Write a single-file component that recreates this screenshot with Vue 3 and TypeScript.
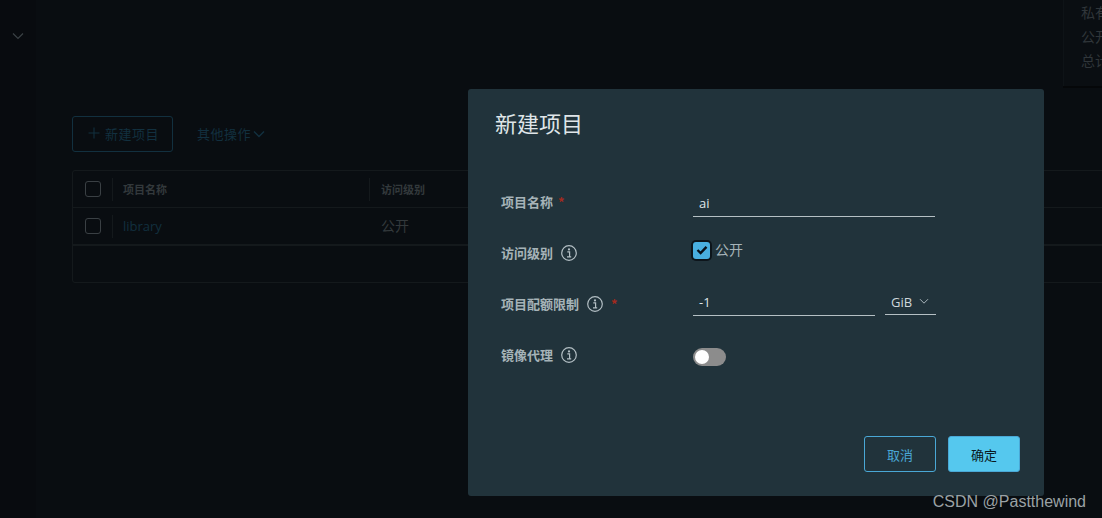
<script setup lang="ts">
interface Field { label: string; required?: boolean; info?: boolean }
const labels: Field[] = [
  { label: '项目名称', required: true },
  { label: '访问级别', info: true },
  { label: '项目配额限制', info: true, required: true },
  { label: '镜像代理', info: true }
]
</script>

<template>
  <div class="page">
    <aside class="side">
      <svg class="side-chev" width="14" height="10" viewBox="0 0 14 10"><path d="M2 2.5 7 7.5 12 2.5" fill="none" stroke="#3a4145" stroke-width="1.2" /></svg>
    </aside>
    <main class="main">
      <section class="summary">
        <div>私有</div>
        <div>公开</div>
        <div>总计</div>
      </section>
      <div class="toolbar">
        <button class="new-btn" type="button">
          <svg width="14" height="14" viewBox="0 0 14 14"><path d="M7 1.5v11M1.5 7h11" stroke="#12303f" stroke-width="1.1" fill="none" /></svg>
          <span>新建项目</span>
        </button>
        <span class="more">其他操作
          <svg width="12" height="8" viewBox="0 0 12 8"><path d="M1 1.5 6 6.5 11 1.5" fill="none" stroke="#12303f" stroke-width="1.4" /></svg>
        </span>
      </div>
      <div class="table">
        <div class="row head">
          <span class="box"></span>
          <span class="cell name"><i class="sep"></i>项目名称</span>
          <span class="cell"><i class="sep"></i>访问级别</span>
        </div>
        <div class="row body">
          <span class="box"></span>
          <span class="cell name link"><i class="sep"></i>library</span>
          <span class="cell plain">公开</span>
        </div>
        <div class="foot"></div>
      </div>
    </main>

    <div class="modal">
      <h3 class="title">新建项目</h3>
      <div class="form">
        <div class="labels">
          <div v-for="f in labels" :key="f.label" class="label">
            <span>{{ f.label }}</span>
            <svg v-if="f.info" class="info" width="18" height="18" viewBox="0 0 18 18">
              <circle cx="9" cy="9" r="7.3" fill="none" stroke="#b3bfc4" stroke-width="1.2" />
              <circle cx="9" cy="5.4" r="1.1" fill="#b3bfc4" />
              <path d="M7.3 7.8H9.6V12.6M7 12.8H11.2" fill="none" stroke="#b3bfc4" stroke-width="1.2" />
            </svg>
            <span v-if="f.required" class="req">*</span>
          </div>
        </div>
        <div class="controls">
          <div class="input wide">ai</div>
          <label class="check">
            <span class="check-box">
              <svg width="12" height="10" viewBox="0 0 12 10"><path d="M1.5 5 4.6 8 10.5 1.8" fill="none" stroke="#08111a" stroke-width="2.4" /></svg>
            </span>
            <span class="check-text">公开</span>
          </label>
          <div class="quota">
            <div class="input num">-1</div>
            <div class="select">GiB
              <svg width="10" height="7" viewBox="0 0 10 7"><path d="M1 1.2 5 5.2 9 1.2" fill="none" stroke="#aab6bb" stroke-width="1" /></svg>
            </div>
          </div>
          <div class="toggle"><span class="knob"></span></div>
        </div>
      </div>
      <div class="actions">
        <button class="btn ghost" type="button">取消</button>
        <button class="btn primary" type="button">确定</button>
      </div>
    </div>

    <div class="mark">CSDN @Pastthewind</div>
  </div>
</template>

<style>
html, body { margin: 0; background: #080c10; }
</style>

<style scoped>
.page {
  position: relative;
  display: flex;
  width: 1102px;
  height: 518px;
  overflow: hidden;
  background: #080c10;
  font-family: "Liberation Sans", "Noto Sans CJK SC", sans-serif;
}
.side { width: 36px; flex: none; background: #080b0f; padding-top: 31px; box-sizing: border-box; }
.side-chev { display: block; margin-left: 11px; }
.main { position: relative; flex: 1; padding: 116px 0 0 36px; background: #090d11; min-width: 0; overflow: hidden; }
.summary {
  position: absolute;
  left: 1027px;
  top: 0;
  width: 39px;
  height: 86px;
  box-sizing: border-box;
  padding: 1px 0 0 17px;
  background: #0a0e12;
  border-left: 1px solid #0e1317;
  box-shadow: 0 2px 0 #050709;
  color: #30363a;
  font-size: 14px;
  line-height: 24px;
  white-space: nowrap;
}
.toolbar { display: flex; align-items: center; height: 36px; }
.new-btn {
  display: flex;
  align-items: center;
  gap: 4px;
  width: 101px;
  height: 36px;
  box-sizing: border-box;
  padding: 0 0 2px 14px;
  background: transparent;
  border: 1px solid #12303f;
  border-radius: 3px;
  color: #12303f;
  font: 13px "Noto Sans CJK SC", sans-serif;
  letter-spacing: 0.5px;
}
.more { display: flex; align-items: center; gap: 2px; margin-left: 24px; padding-bottom: 1px; color: #12303f; font-size: 13px; letter-spacing: 0.5px; }
.table {
  width: 1100px;
  margin-top: 18px;
  height: 113px;
  box-sizing: border-box;
  border: 1px solid #14191c;
  border-radius: 3px;
  display: flex;
  flex-direction: column;
}
.row { display: flex; align-items: center; height: 36px; border-bottom: 1px solid #14191c; box-sizing: content-box; }
.box { width: 16px; height: 16px; margin-left: 12px; box-sizing: border-box; flex: none; border: 1px solid #3a4044; border-radius: 3px; }
.cell { position: relative; display: flex; align-items: center; height: 100%; font-size: 11px; font-weight: 700; color: #33393c; padding-left: 12px; }
.name { width: 246px; margin-left: 11px; padding-left: 11px; }
.sep { position: absolute; left: 0; top: 7px; bottom: 6px; width: 1px; background: #14191c; }
.link { color: #12303f; font-weight: 400; font-size: 13px; font-family: "Open Sans", sans-serif; }
.plain { font-weight: 400; font-size: 14px; padding-bottom: 3px; height: calc(100% - 3px); }
.body { height: 36px; border-bottom-width: 2px; }
.foot { flex: 1; }

.modal {
  position: absolute;
  left: 468px;
  top: 89px;
  width: 576px;
  height: 407px;
  box-sizing: border-box;
  padding: 18px 24px 24px 27px;
  background: #21333b;
  border-radius: 3px;
  display: flex;
  flex-direction: column;
}
.title { margin: 0; font: 400 22px/30px "Noto Sans CJK SC", sans-serif; color: #dfe5e8; }
.form { display: flex; margin-top: 52px; flex: 1; }
.labels { width: 191px; flex: none; padding-left: 6px; box-sizing: border-box; }
.label {
  display: flex;
  align-items: center;
  height: 26px;
  margin-bottom: 25px;
  font: 700 13px "Noto Sans CJK SC", sans-serif;
  color: #a6b3b8;
}
.label > span:first-child { position: relative; top: -1px; }
.info { margin-left: 7px; position: relative; top: 0; }
.req { margin-left: 5px; color: #a32a1e; font-weight: 700; font-size: 13px; position: relative; top: -1px; }
.info + .req { margin-left: 7px; }
.controls { display: flex; flex-direction: column; width: 244px; padding-left: 7px; box-sizing: content-box; }
.input {
  height: 28px;
  box-sizing: border-box;
  padding: 4px 0 0 6px;
  border-bottom: 1px solid #b5c0c4;
  color: #dfe5e8;
  font: 13px/20px "Open Sans", sans-serif;
}
.wide { width: 242px; }
.check { display: flex; align-items: center; gap: 5px; margin-top: 22px; height: 22px; color: #a6b3b8; font-size: 14px; }
.check-text { position: relative; top: -1px; }
.check-box {
  width: 17px;
  height: 17px;
  display: flex;
  align-items: center;
  justify-content: center;
  background: #49afe0;
  border-radius: 3px;
  box-shadow: 0 0 0 2px #0d151b;
}
.quota { display: flex; gap: 10px; margin-top: 27px; align-items: flex-start; }
.num { width: 182px; }
.select {
  width: 51px;
  height: 27px;
  box-sizing: border-box;
  display: flex;
  align-items: center;
  gap: 7px;
  padding: 1px 0 0 6px;
  border-bottom: 1px solid #b5c0c4;
  color: #cfd8dc;
  font: 13px "Open Sans", sans-serif;
}
.toggle {
  position: relative;
  width: 33px;
  height: 18px;
  margin-top: 32px;
  border-radius: 9px;
  background: #8c8c8c;
}
.knob { position: absolute; left: 2px; top: 2px; width: 14px; height: 14px; border-radius: 50%; background: #fff; }
.actions { display: flex; justify-content: flex-end; gap: 12px; }
.btn {
  width: 72px;
  height: 36px;
  border-radius: 3px;
  font: 13px "Noto Sans CJK SC", sans-serif;
  padding: 0;
}
.ghost { background: transparent; border: 1px solid #4aa8d6; color: #4aa8d6; }
.primary { background: #55c8ee; border: 1px solid #4aa8d6; color: #0a1820; }
.mark {
  position: absolute;
  right: 16px;
  bottom: 7px;
  color: #9ba2a5;
  font: 16px "Liberation Sans", sans-serif;
}
</style>
